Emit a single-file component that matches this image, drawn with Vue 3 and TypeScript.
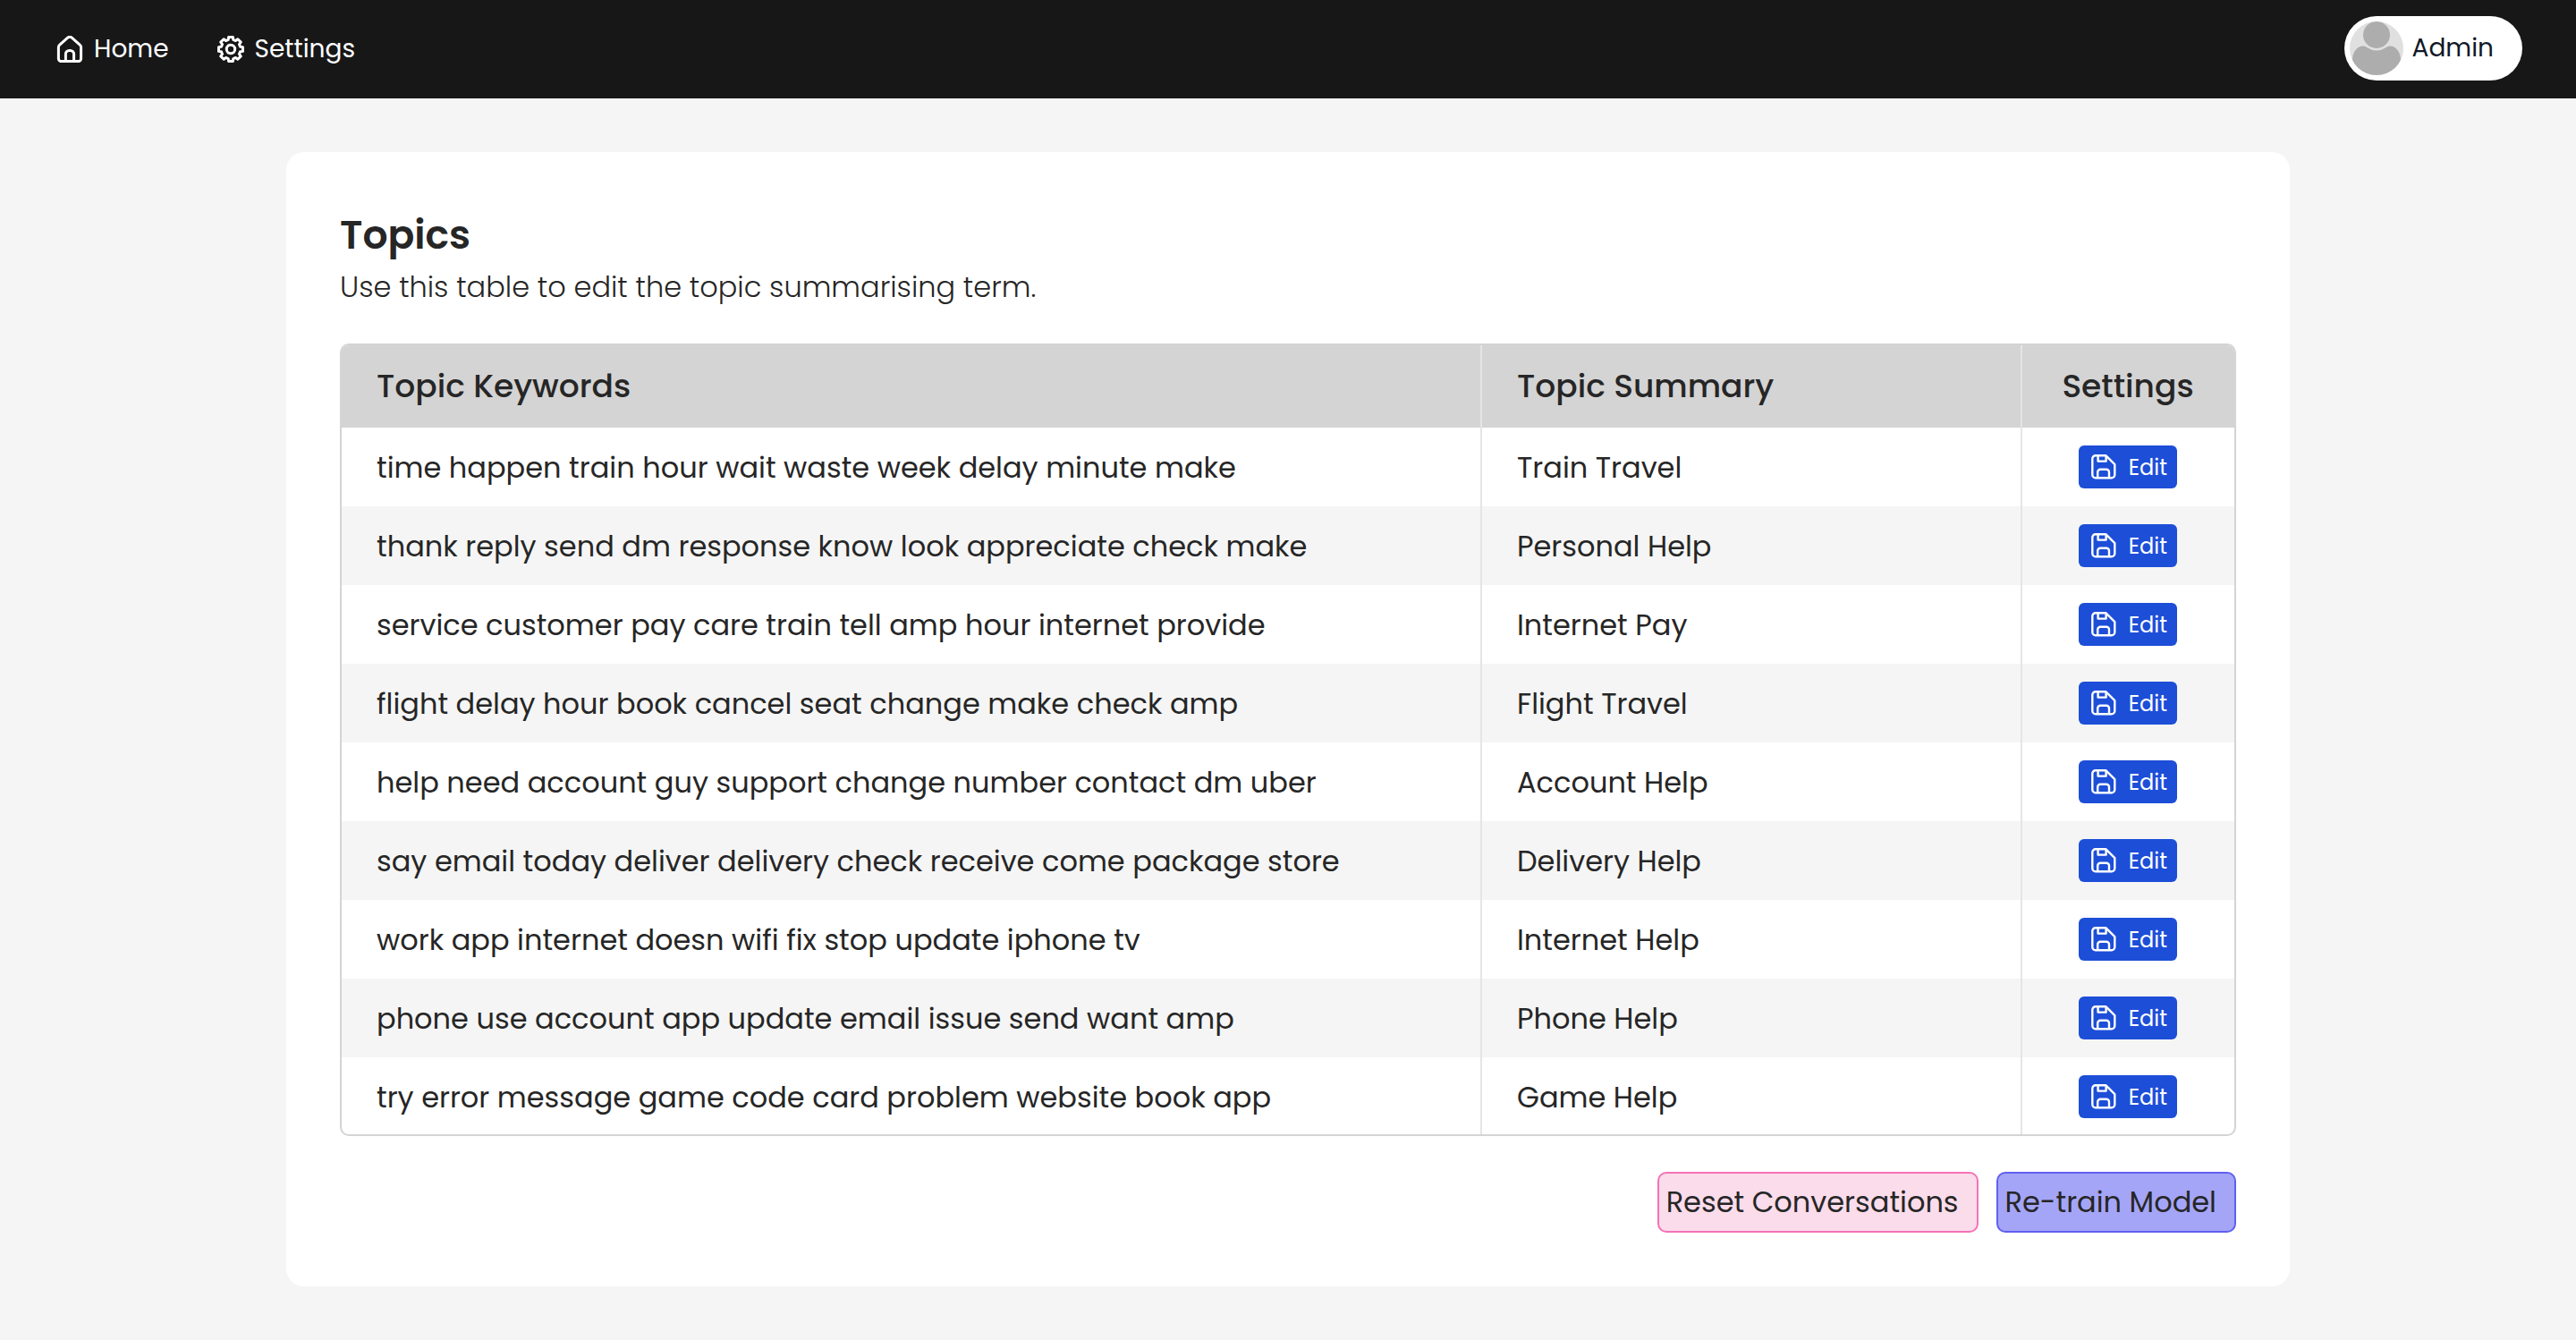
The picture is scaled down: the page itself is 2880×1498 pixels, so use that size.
<script setup lang="ts">
interface Topic {
  keywords: string
  summary: string
}

const topics: Topic[] = [
  { keywords: 'time happen train hour wait waste week delay minute make', summary: 'Train Travel' },
  { keywords: 'thank reply send dm response know look appreciate check make', summary: 'Personal Help' },
  { keywords: 'service customer pay care train tell amp hour internet provide', summary: 'Internet Pay' },
  { keywords: 'flight delay hour book cancel seat change make check amp', summary: 'Flight Travel' },
  { keywords: 'help need account guy support change number contact dm uber', summary: 'Account Help' },
  { keywords: 'say email today deliver delivery check receive come package store', summary: 'Delivery Help' },
  { keywords: 'work app internet doesn wifi fix stop update iphone tv', summary: 'Internet Help' },
  { keywords: 'phone use account app update email issue send want amp', summary: 'Phone Help' },
  { keywords: 'try error message game code card problem website book app', summary: 'Game Help' },
]

// Outline of an eight-toothed cog centred on (15, 15)
function cogPath(): string {
  const corners: [number, number][] = [[-15, 10.9], [-10, 13.7], [10, 13.7], [15, 10.9]]
  const points: string[] = []
  for (let tooth = 0; tooth < 8; tooth++) {
    for (const [offset, radius] of corners) {
      const angle = ((tooth * 45 + offset - 90) * Math.PI) / 180
      points.push(`${(15 + radius * Math.cos(angle)).toFixed(2)} ${(15 + radius * Math.sin(angle)).toFixed(2)}`)
    }
  }
  return `M${points.join('L')}Z`
}

const cog = cogPath()
</script>

<template>
  <div class="page">
    <header class="topbar">
      <nav class="links">
        <a href="#home" class="link">
          <svg width="30" height="30" viewBox="0 0 30 30" class="icon" aria-hidden="true">
            <path d="M2.4 12.8c0-1.2.4-2 1.3-2.7l9-7.9c1.3-1.1 3.3-1.1 4.6 0l9 7.9c.9.7 1.3 1.5 1.3 2.7v12.8a3 3 0 0 1-3 3H5.4a3 3 0 0 1-3-3z" />
            <path d="M10.400 28.600v-8.200a4 4 0 0 1 4-4h1.200a4 4 0 0 1 4 4v8.200" />
          </svg>
          <span>Home</span>
        </a>
        <a href="#settings" class="link">
          <svg width="30" height="30" viewBox="0 0 30 30" class="icon" aria-hidden="true">
            <path :d="cog" />
            <circle cx="15" cy="15" r="4.7" />
          </svg>
          <span>Settings</span>
        </a>
      </nav>
      <button type="button" class="account">
        <svg width="60" height="60" viewBox="0 0 60 60" aria-hidden="true">
          <defs>
            <clipPath id="avatar-clip"><circle cx="30" cy="30" r="30" /></clipPath>
          </defs>
          <g clip-path="url(#avatar-clip)">
            <rect width="60" height="60" fill="#e0e0e0" />
            <circle cx="30" cy="15" r="15" fill="#adadad" />
            <path fill="#adadad" d="M3 60V43c0-8 5-15.4 11.7-15.4 2.2 0 3.5.6 5 1.6A18 18 0 0 0 40.3 29.2c1.5-1 2.8-1.600 5-1.600C52 27.600 57 35 57 43v17z" />
          </g>
        </svg>
        <span>Admin</span>
      </button>
    </header>

    <main class="content">
      <section class="card">
        <h1>Topics</h1>
        <p class="lead">Use this table to edit the topic summarising term.</p>

        <div class="table-frame">
          <table>
            <colgroup>
              <col />
              <col class="col-summary" />
              <col class="col-settings" />
            </colgroup>
            <thead>
              <tr>
                <th scope="col">Topic Keywords</th>
                <th scope="col">Topic Summary</th>
                <th scope="col">Settings</th>
              </tr>
            </thead>
            <tbody>
              <tr v-for="topic in topics" :key="topic.keywords">
                <td>{{ topic.keywords }}</td>
                <td>{{ topic.summary }}</td>
                <td>
                  <button type="button" class="edit">
                    <svg width="28" height="28" viewBox="0 0 28 28" class="icon thin" aria-hidden="true">
                      <path d="M4.8 1.300H16.500L26.300 11.100V22.800a3.500 3.500 0 0 1-3.500 3.500H4.800a3.500 3.500 0 0 1-3.500-3.500V4.800a3.500 3.500 0 0 1 3.500-3.500z" />
                      <path d="M7.6 1.300V7.600H16.600V1.300" />
                      <path d="M7.2 26.300V19.800a3 3 0 0 1 3-3H17a3 3 0 0 1 3 3V26.300" />
                    </svg>
                    <span>Edit</span>
                  </button>
                </td>
              </tr>
            </tbody>
          </table>
        </div>

        <div class="actions">
          <button type="button" class="action reset">Reset Conversations</button>
          <button type="button" class="action retrain">Re-train Model</button>
        </div>
      </section>
    </main>
  </div>
</template>

<style>
body {
  margin: 0;
  background: #f5f5f5;
}
</style>

<style scoped>
.page {
  min-height: 100vh;
  background: #f5f5f5;
  color: #262626;
  font-family: Poppins, Inter, "Noto Sans", sans-serif;
  font-size: 32px;
}

*,
*::before,
*::after {
  box-sizing: border-box;
}

button {
  margin: 0;
  font-family: inherit;
  cursor: pointer;
}

.topbar {
  display: flex;
  align-items: center;
  justify-content: space-between;
  height: 110px;
  padding: 0 60px 2px 63px;
  background: #171717;
}

.links {
  display: flex;
  gap: 54px;
  padding-top: 2px;
}

.link {
  display: flex;
  align-items: center;
  gap: 12px;
  color: #fff;
  font-size: 28px;
  line-height: 40px;
  text-decoration: none;
}

.icon {
  flex: none;
  fill: none;
  stroke: currentColor;
  stroke-width: 3;
  stroke-linejoin: round;
}

.icon.thin {
  stroke-width: 2.4;
}

.account {
  display: flex;
  align-items: center;
  gap: 10px;
  height: 72px;
  padding: 0 32px 0 6px;
  border: 0;
  border-radius: 36px;
  background: #fff;
  color: #111827;
  font-size: 28px;
}

.content {
  padding: 60px;
}

.card {
  max-width: 2240px;
  margin: 0 auto;
  padding: 60px;
  border-radius: 20px;
  background: #fff;
}

h1 {
  margin: 0;
  font-size: 44px;
  font-weight: 600;
  line-height: 66px;
}

.lead {
  margin: 0 0 38px;
  font-weight: 300;
  line-height: 50px;
}

.table-frame {
  overflow: hidden;
  border: 2px solid #d4d4d4;
  border-radius: 10px;
}

table {
  width: 100%;
  border-collapse: separate;
  border-spacing: 0;
  table-layout: fixed;
}

.col-summary {
  width: 604px;
}

.col-settings {
  width: 237px;
}

th,
td {
  padding: 21px 39px 19px;
  text-align: left;
}

th {
  height: 92px;
  padding-top: 20px;
  padding-bottom: 20px;
  background: #d4d4d4;
  font-size: 36px;
  font-weight: 500;
  line-height: 52px;
}

td {
  height: 88px;
  line-height: 48px;
}

th:not(:last-child),
td:not(:last-child) {
  border-right: 2px solid #e5e5e5;
}

th:last-child,
td:last-child {
  padding: 20px 1px 20px 0;
  text-align: center;
}

tbody tr:nth-child(even) {
  background: #f5f5f5;
}

tbody tr:last-child td {
  height: 86px;
  padding-bottom: 17px;
}

tbody tr:last-child td:last-child {
  padding-bottom: 18px;
}

.edit {
  display: inline-flex;
  align-items: center;
  justify-content: space-between;
  width: 110px;
  height: 48px;
  padding: 0 11px 0 14px;
  border: 0;
  border-radius: 6px;
  background: #1d4ed8;
  color: #fff;
  font-size: 24px;
  vertical-align: top;
}

.actions {
  display: flex;
  justify-content: flex-end;
  gap: 20px;
  margin-top: 40px;
}

.action {
  height: 68px;
  padding: 0 20px 0 8px;
  border: 2px solid;
  border-radius: 10px;
  color: #262626;
  font-size: 32px;
}

.reset {
  border-color: #f472b6;
  background: #fbdceb;
}

.retrain {
  border-color: #6060f0;
  background: #a5a5f7;
}
</style>
